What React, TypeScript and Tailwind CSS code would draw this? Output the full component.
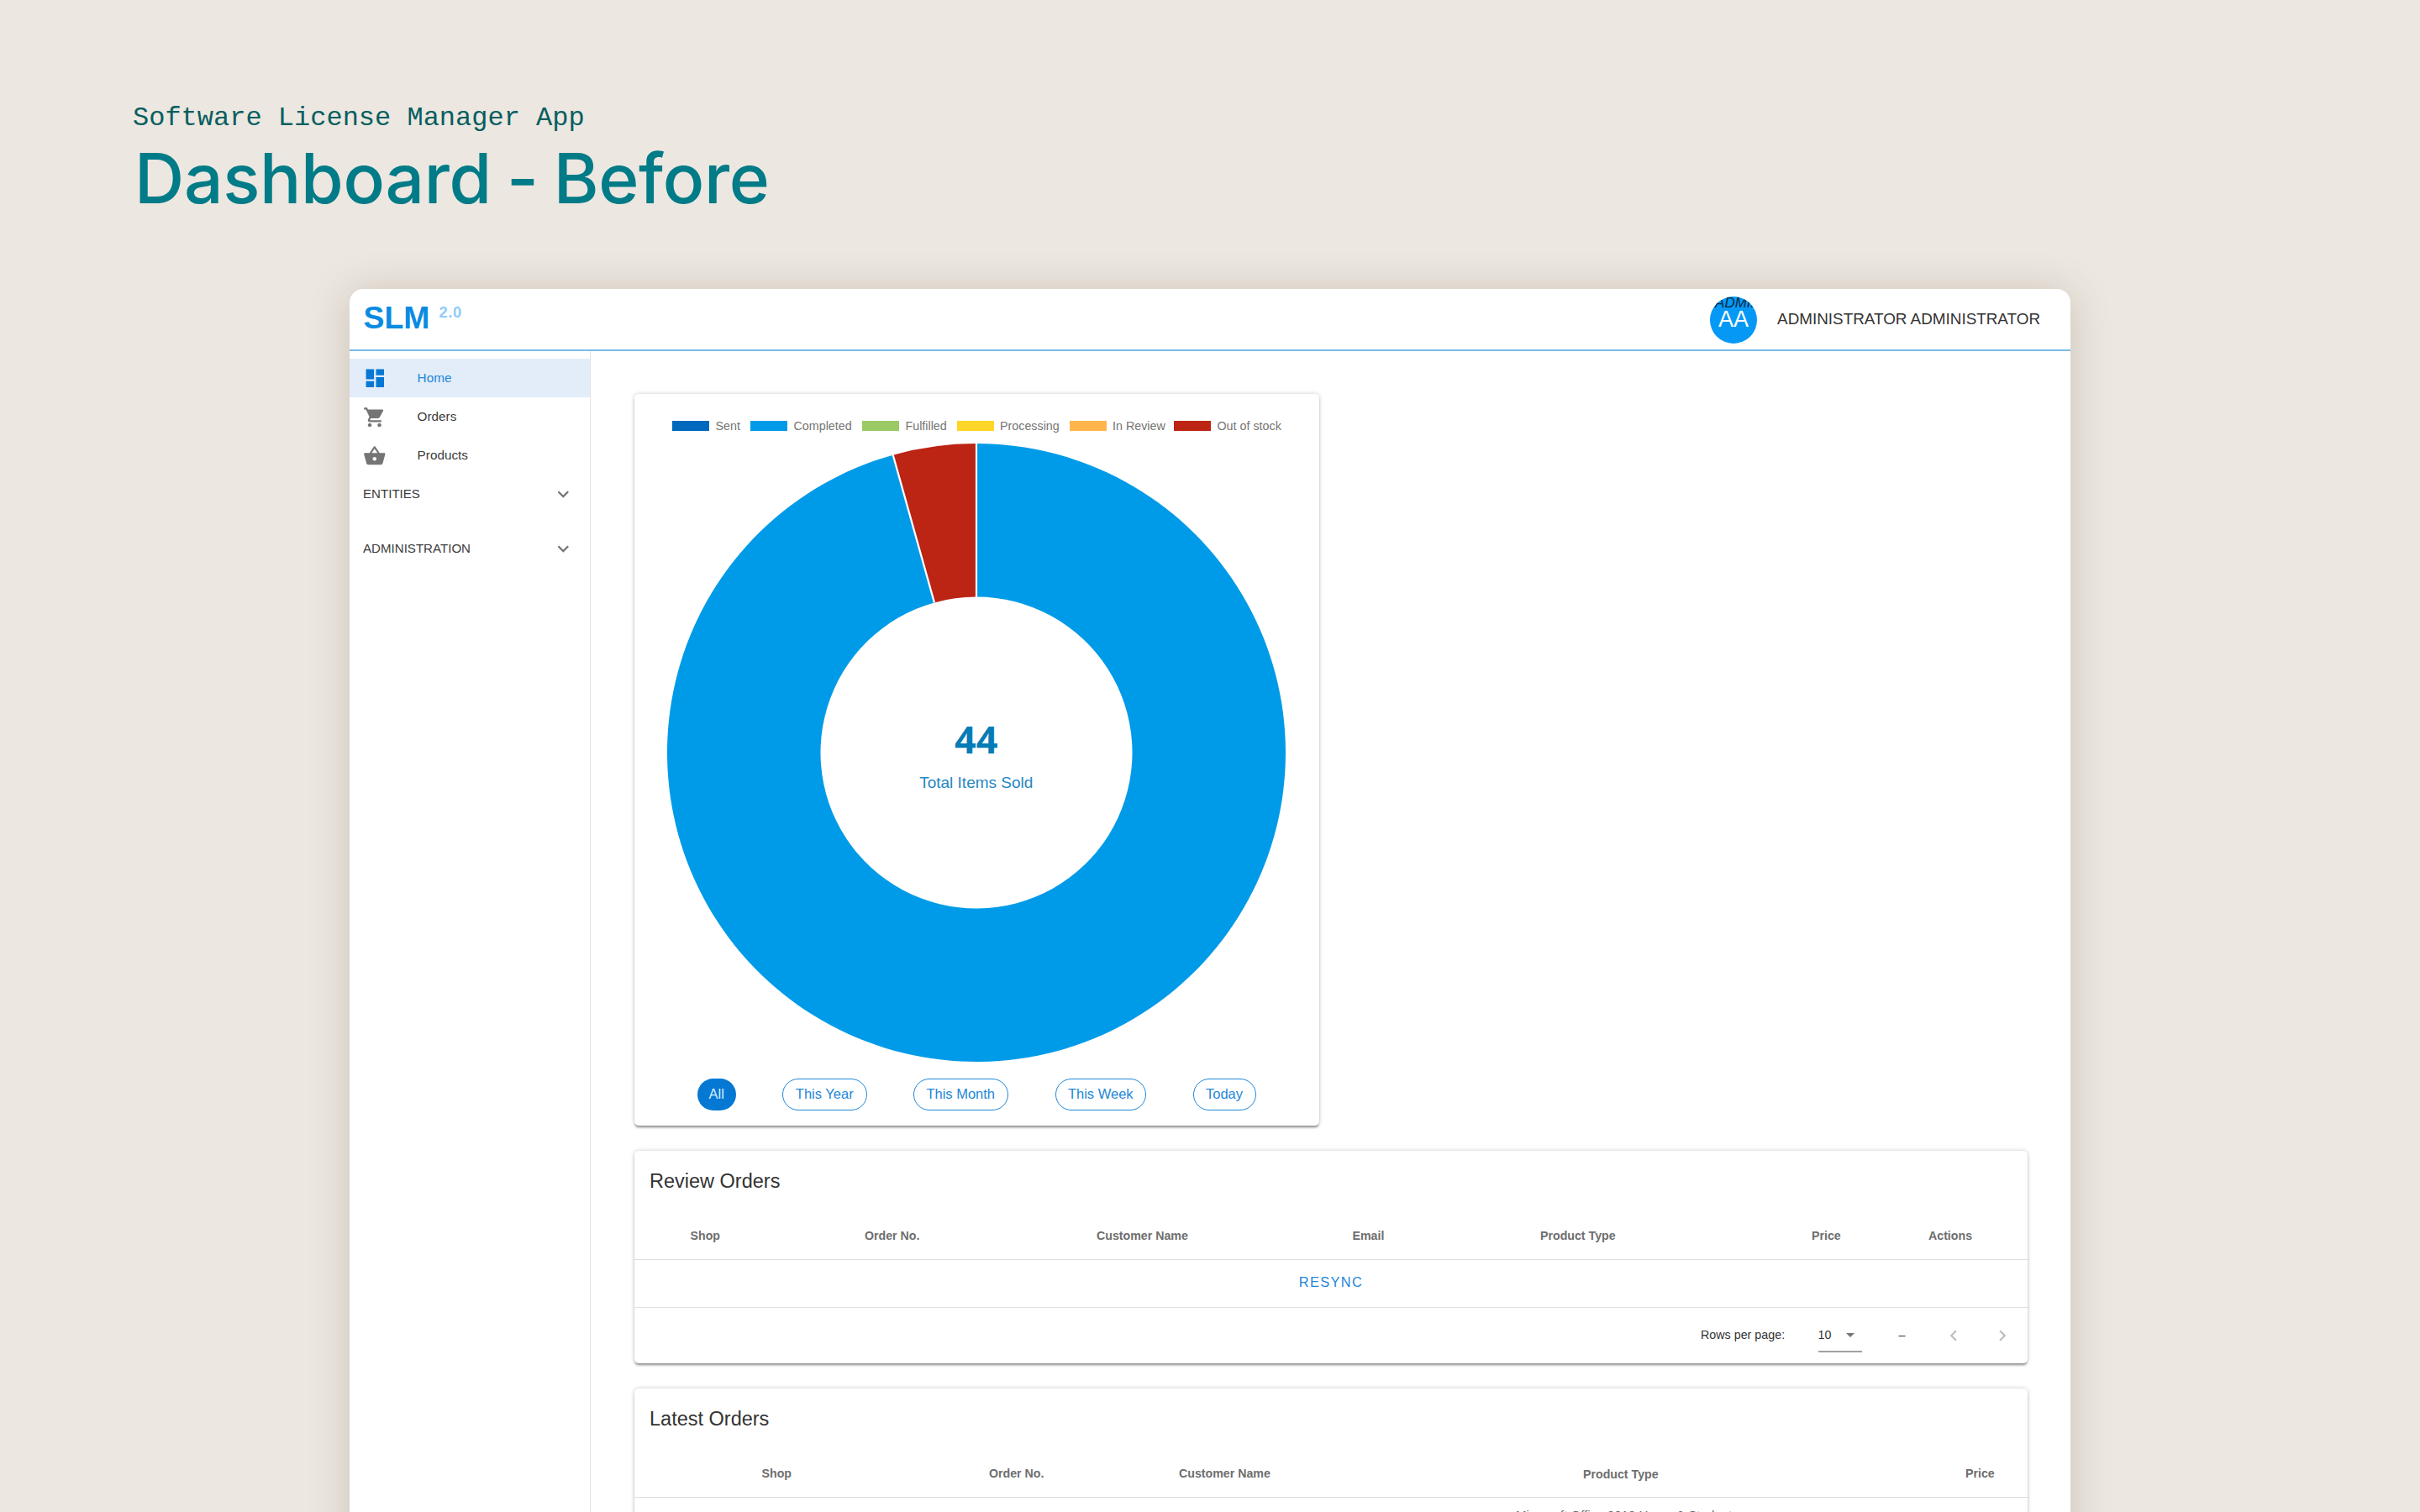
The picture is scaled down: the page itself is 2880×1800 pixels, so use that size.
import React from "react";

interface Column {
    label: string;
    width: string;
}

interface LegendItem {
    label: string;
    color: string;
    width: string;
}

const legend: LegendItem[] = [
    { label: "Sent", color: "bg-[#0068bd]", width: "w-[93px]" },
    { label: "Completed", color: "bg-[#009be8]", width: "w-[133px]" },
    { label: "Fulfilled", color: "bg-[#9bca65]", width: "w-[112.5px]" },
    { label: "Processing", color: "bg-[#ffd527]", width: "w-[134px]" },
    { label: "In Review", color: "bg-[#ffb54b]", width: "w-[124.5px]" },
    { label: "Out of stock", color: "bg-[#bc2414]", width: "w-[130px]" },
];

const reviewColumns: Column[] = [
    { label: "Shop", width: "w-[207.5px]" },
    { label: "Order No.", width: "w-[276px]" },
    { label: "Customer Name", width: "w-[304.5px]" },
    { label: "Email", width: "w-[223.5px]" },
    { label: "Product Type", width: "w-[323px]" },
    { label: "Price", width: "w-[139px]" },
    { label: "Actions", width: "w-[80px]" },
];

const latestColumns: Column[] = [
    { label: "Shop", width: "w-[270.5px]" },
    { label: "Order No.", width: "w-[226px]" },
    { label: "Customer Name", width: "w-[481px]" },
    { label: "Product Type", width: "w-[455px] pt-[2px]" },
    { label: "Price", width: "w-[60px]" },
];

const cardClasses =
    "shrink-0 bg-white rounded-[5px] shadow-[0_3px_3px_-1px_rgba(0,0,0,0.4),0_0_5px_rgba(0,0,0,0.22)]";

const Icon = ({ d, classes }: { d: string; classes: string }): JSX.Element => (
    <svg className={classes} viewBox="0 0 24 24" fill="currentColor">
        <path d={d} />
    </svg>
);

const paths = {
    dashboard: "M3 13h8V3H3v10zm0 8h8v-6H3v6zm10 0h8V11h-8v10zm0-18v6h8V3h-8z",
    cart: "M7 18c-1.1 0-1.99.9-1.99 2S5.9 22 7 22s2-.9 2-2-.9-2-2-2zM1 2v2h2l3.6 7.59-1.35 2.45c-.16.28-.25.61-.25.96 0 1.1.9 2 2 2h12v-2H7.42c-.14 0-.25-.11-.25-.25l.03-.12.9-1.63h7.45c.75 0 1.41-.41 1.75-1.03l3.58-6.49c.08-.14.12-.31.12-.48 0-.55-.45-1-1-1H5.21l-.94-2H1zm16 16c-1.1 0-1.99.9-1.99 2s.89 2 1.99 2 2-.9 2-2-.9-2-2-2z",
    basket: "M17.21 9l-4.38-6.56c-.19-.28-.51-.42-.83-.42-.32 0-.64.14-.83.43L6.79 9H2c-.55 0-1 .45-1 1 0 .09.01.18.04.27l2.54 9.27c.23.84 1 1.46 1.92 1.46h13c.92 0 1.69-.62 1.93-1.46l2.54-9.27L23 10c0-.55-.45-1-1-1h-4.79zM9 9l3-4.4L15 9H9zm3 8c-1.1 0-2-.9-2-2s.9-2 2-2 2 .9 2 2-.9 2-2 2z",
    expand: "M16.59 8.59L12 13.17 7.41 8.59 6 10l6 6 6-6z",
    left: "M15.41 7.41L14 6l-6 6 6 6 1.41-1.41L10.83 12z",
    right: "M10 6L8.59 7.41 13.17 12l-4.58 4.59L10 18l6-6z",
    dropdown: "M7 10l5 5 5-5z",
};

const Header = (): JSX.Element => (
    <header className="flex h-[74px] items-center justify-between border-b-2 border-[#79b9e8] pl-[16.5px] pr-[36px]">
        <div className="flex items-center gap-[11px]">
            <span className="mb-[3px] text-[37.4px] font-bold leading-none text-[#0a8be2]">
                SLM
            </span>
            <span className="mb-[15px] text-[18.4px] font-bold leading-none tracking-[0.6px] text-[#8fcbfb]">
                2.0
            </span>
        </div>
        <div className="flex items-center">
            <div className="relative mr-[24px] mt-px flex h-[56px] w-[56px] items-center justify-center overflow-hidden rounded-full bg-[#0599f5]">
                {/* alt text of the missing picture, clipped by the circle */}
                <span className="absolute left-[6px] top-[-2px] text-[17px] italic leading-[20px] text-[#052a45]">
                    ADMINISTRATOR
                </span>
                <span className="relative text-[27px] leading-none text-white">AA</span>
            </div>
            <span className="text-[18.86px] leading-none text-[#333]">
                ADMINISTRATOR ADMINISTRATOR
            </span>
        </div>
    </header>
);

const NavItem = ({
    label,
    icon,
    active,
}: {
    label: string;
    icon: string;
    active?: boolean;
}): JSX.Element => (
    <div
        className={
            active
                ? "flex h-[46.3px] items-center bg-[#e2edf9] pl-[16px] text-[#2387d8]"
                : "flex h-[46.3px] items-center pl-[16px] text-[#3c3c3c]"
        }
    >
        <Icon
            d={icon}
            classes={
                active
                    ? "h-[28.6px] w-[28.6px] text-[#0478d3]"
                    : "h-[27.6px] w-[27.6px] text-[#757575]"
            }
        />
        <span className={active ? "ml-[36px] text-[15.3px]" : "ml-[37px] text-[15.3px]"}>
            {label}
        </span>
    </div>
);

const NavGroup = ({ label }: { label: string }): JSX.Element => (
    <div className="mb-[19px] flex h-[45.3px] items-center justify-between pl-[16px] pr-[18px] text-[#3c3c3c]">
        <span className="text-[15.1px]">{label}</span>
        <Icon d={paths.expand} classes="h-[26.6px] w-[26.6px] text-[#757575]" />
    </div>
);

const Donut = (): JSX.Element => {
    const angle = (2 / 46) * 2 * Math.PI;
    const outer = 368;
    const inner = 185.5;
    const x = Math.sin(angle);
    const y = Math.cos(angle);
    return (
        <svg className="block h-[740px] w-[740px]" viewBox="-370 -370 740 740">
            <path
                d={`M0 ${-outer}A${outer} ${outer} 0 1 1 ${-outer * x} ${-outer * y}L${-inner * x} ${-inner * y}A${inner} ${inner} 0 1 0 0 ${-inner}Z`}
                fill="#009be8"
            />
            <path
                d={`M${-outer * x} ${-outer * y}A${outer} ${outer} 0 0 1 0 ${-outer}V${-inner}A${inner} ${inner} 0 0 0 ${-inner * x} ${-inner * y}Z`}
                fill="#bc2414"
            />
            <path
                d={`M0 ${-outer - 1}V${-inner + 1}M${-outer * x} ${-outer * y}L${-inner * x} ${-inner * y}`}
                stroke="#fff"
                strokeWidth="2.2"
            />
        </svg>
    );
};

const pill =
    "flex h-[38px] items-center justify-center rounded-full border border-[#2088d8] text-[16.5px] leading-none text-[#2387d8]";

const ChartCard = (): JSX.Element => (
    <section className={`${cardClasses} flex h-[871px] w-[814.5px] flex-col`}>
        <div className="mt-[31.5px] flex h-[12px] items-center pl-[45px]">
            {legend.map((item) => (
                <div key={item.label} className={`${item.width} flex shrink-0 items-center`}>
                    <div className={`${item.color} h-[12px] w-[44px]`} />
                    <span className="ml-[7.5px] whitespace-nowrap text-[14.3px] leading-[12px] text-[#757575]">
                        {item.label}
                    </span>
                </div>
            ))}
        </div>
        <div className="mt-[13px] grid place-items-center">
            <div className="col-start-1 row-start-1">
                <Donut />
            </div>
            <div className="col-start-1 row-start-1 flex flex-col items-center pr-[1px] pt-[5px]">
                <span className="font-['Open_Sans'] text-[45px] font-bold leading-[50px] text-[#057cb7]">
                    44
                </span>
                <span className="mt-[17px] text-[19px] leading-[20px] text-[#2787bf]">
                    Total Items Sold
                </span>
            </div>
        </div>
        <div className="mt-[18px] flex pl-[74.5px]">
            <div className="flex h-[38px] w-[46.5px] items-center justify-center rounded-full bg-[#0478d3] text-[16.5px] leading-none text-[#d8efff]">
                All
            </div>
            <div className={`${pill} ml-[55px] w-[100.5px]`}>This Year</div>
            <div className={`${pill} ml-[55.5px] w-[112.5px]`}>This Month</div>
            <div className={`${pill} ml-[56px] w-[108.5px]`}>This Week</div>
            <div className={`${pill} ml-[55.5px] w-[75px]`}>Today</div>
        </div>
    </section>
);

const TableHead = ({ columns, classes }: { columns: Column[]; classes: string }): JSX.Element => (
    <div
        className={`${classes} flex h-[56.5px] items-center border-b border-[#dcdcdc] text-[14.2px] font-bold leading-[16px] text-[#6e6e6e]`}
    >
        {columns.map((column) => (
            <div key={column.label} className={`${column.width} shrink-0`}>
                {column.label}
            </div>
        ))}
    </div>
);

const ReviewOrders = (): JSX.Element => (
    <section className={`${cardClasses} h-[253px]`}>
        <h2 className="flex h-[73px] items-center pl-[18px] text-[23.5px] leading-none text-[#333]">
            Review Orders
        </h2>
        <TableHead columns={reviewColumns} classes="pl-[66.5px]" />
        <div className="flex h-[57px] items-center justify-center border-b border-[#e0e0e0] pb-[2px] text-[16.4px] leading-none tracking-[1.4px] text-[#2387d8]">
            RESYNC
        </div>
        <div className="flex h-[66px] items-center pl-[1269px] text-[14.3px] leading-none text-[#333]">
            <span className="w-[139.5px]">Rows per page:</span>
            <div className="mt-[2px] flex h-[39px] w-[52px] items-center justify-between border-b-2 border-[#a2a2a2] pb-[1px] pr-[2px]">
                <span>10</span>
                <Icon d={paths.dropdown} classes="h-[24px] w-[24px] text-[#757575]" />
            </div>
            <span className="ml-[44px] w-[10px]">–</span>
            <Icon d={paths.left} classes="ml-[42px] h-[26px] w-[26px] text-[#bdbdbd]" />
            <Icon d={paths.right} classes="ml-[32px] h-[26px] w-[26px] text-[#bdbdbd]" />
        </div>
    </section>
);

const LatestOrders = (): JSX.Element => (
    <section className={`${cardClasses} h-[400px]`}>
        <h2 className="flex h-[73px] items-center pl-[18px] text-[23.5px] leading-none text-[#333]">
            Latest Orders
        </h2>
        <TableHead columns={latestColumns} classes="pl-[151.5px]" />
        <div className="pl-[1049px] pt-[12.5px] text-[15.1px] leading-[18px] text-[#666]">
            Microsoft Office 2019 Home &amp; Student
        </div>
    </section>
);

const App = (): JSX.Element => {
    return (
        <div className="h-[1800px] w-[2880px] overflow-hidden bg-[#ece7e0] font-['Liberation_Sans',sans-serif]">
            <div className="h-[344px] pl-[158px] pt-[121px]">
                <p className="font-['Liberation_Mono',monospace] text-[32px] leading-[40px] text-[#065e60]">
                    Software License Manager App
                </p>
                <h1 className="ml-[2px] whitespace-nowrap font-[Inter] text-[82px] font-medium leading-[104px] tracking-[-0.3px] text-[#007b87] [word-spacing:-3.5px]">
                    Dashboard - Before
                </h1>
            </div>
            <div className="ml-[416px] h-[1600px] w-[2048px] overflow-hidden rounded-[16px] bg-white shadow-[0_4px_48px_rgba(90,65,40,0.22)]">
                <Header />
                <div className="flex h-full">
                    <nav className="w-[287px] border-r border-[#e2e2e2] pt-[9px]">
                        <NavItem label="Home" icon={paths.dashboard} active />
                        <NavItem label="Orders" icon={paths.cart} />
                        <NavItem label="Products" icon={paths.basket} />
                        <NavGroup label="ENTITIES" />
                        <NavGroup label="ADMINISTRATION" />
                    </nav>
                    <main className="flex flex-1 flex-col gap-[30px] pl-[52px] pr-[51px] pt-[51px]">
                        <ChartCard />
                        <ReviewOrders />
                        <LatestOrders />
                    </main>
                </div>
            </div>
        </div>
    );
};

export default App;
